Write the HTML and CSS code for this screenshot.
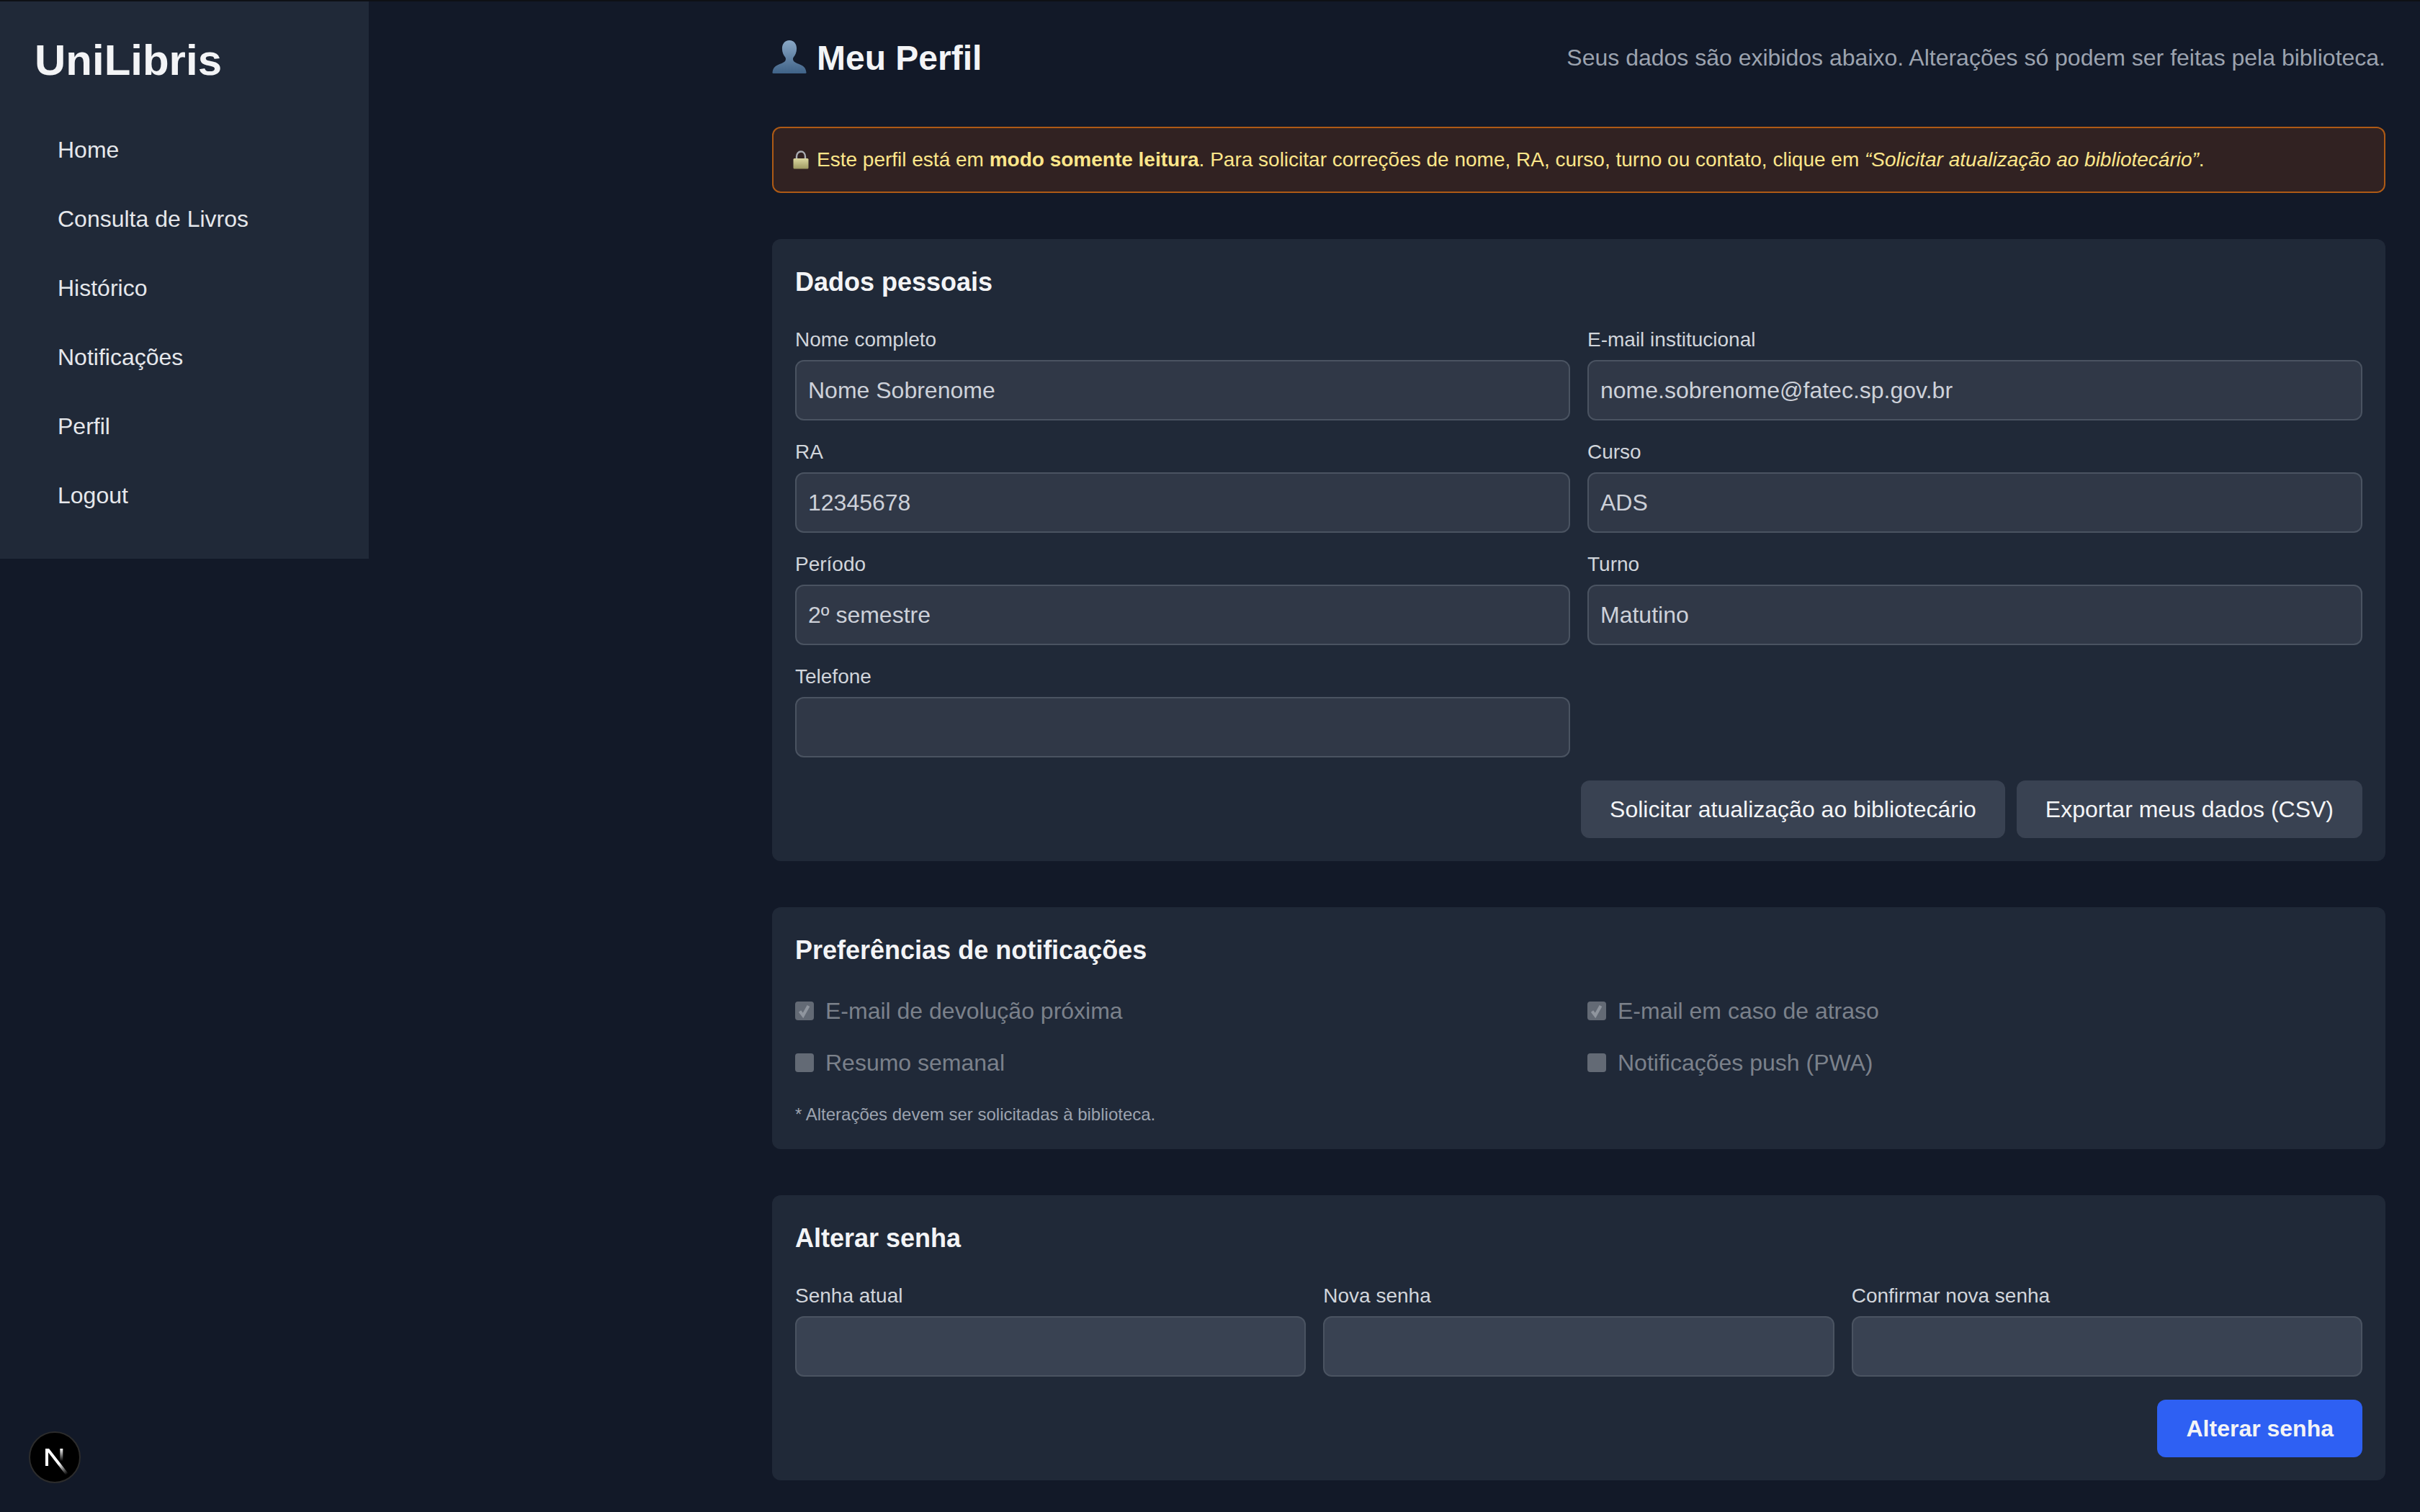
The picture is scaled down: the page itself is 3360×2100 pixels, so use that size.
FILE: index.html
```html
<!DOCTYPE html>
<html lang="pt-BR">
<head>
<meta charset="utf-8">
<title>UniLibris - Meu Perfil</title>
<link rel="stylesheet" href="styles.css">
</head>
<body>
<div class="app">
  <aside class="sidebar">
    <div class="logo">UniLibris</div>
    <nav class="nav">
      <a class="nav-item">Home</a>
      <a class="nav-item">Consulta de Livros</a>
      <a class="nav-item">Histórico</a>
      <a class="nav-item">Notificações</a>
      <a class="nav-item">Perfil</a>
      <a class="nav-item">Logout</a>
    </nav>
  </aside>
  <main class="main">
    <div class="content">
      <header class="page-head">
        <h1 class="page-title">
          <svg class="bust" viewBox="0 0 50 50" aria-hidden="true">
            <defs><linearGradient id="bustg" x1="0" y1="0" x2="0" y2="1"><stop offset="0" stop-color="#8aa8c6"/><stop offset="1" stop-color="#3f6287"/></linearGradient></defs>
            <path fill="url(#bustg)" d="M25 1c-7 0-10.500 5.500-10.500 12 0 5 1.800 9.500 4.500 12.500 1 1.300 1 3.500.2 5-1.500 2.800-6.500 4.200-11 6.200C4 38.500 1.500 41 .5 47.500c-.1 1 .3 1.500 1.200 1.500h46.600c.9 0 1.300-.5 1.200-1.500C48.500 41 46 38.500 41.800 36.700c-4.500-2-9.500-3.400-11-6.200-.8-1.500-.8-3.700.2-5 2.700-3 4.500-7.500 4.500-12.500C35.500 6.500 32 1 25 1z"/>
          </svg>
          <span>Meu Perfil</span>
        </h1>
        <p class="page-sub">Seus dados são exibidos abaixo. Alterações só podem ser feitas pela biblioteca.</p>
      </header>

      <div class="alert">
        <svg class="lock" viewBox="0 0 22 26" aria-hidden="true">
          <defs><linearGradient id="lockg" x1="0" y1="0" x2="0" y2="1"><stop offset="0" stop-color="#dcd8a0"/><stop offset="1" stop-color="#9f9a62"/></linearGradient></defs>
          <path fill="none" stroke="#a9adb3" stroke-width="2.400" d="M5 12V8.500C5 4.500 7.500 1.500 11 1.500s6 3 6 7V12"/>
          <rect x="0.500" y="11" width="21" height="14.500" rx="1.500" fill="url(#lockg)"/>
        </svg>
        <span>Este perfil está em <strong>modo somente leitura</strong>. Para solicitar correções de nome, RA, curso, turno ou contato, clique em <em>“Solicitar atualização ao bibliotecário”</em>.</span>
      </div>

      <section class="card">
        <h2 class="card-title">Dados pessoais</h2>
        <div class="grid-2">
          <label class="field"><span class="field-label">Nome completo</span><input class="input" readonly value="Nome Sobrenome"></label>
          <label class="field"><span class="field-label">E-mail institucional</span><input class="input" readonly value="nome.sobrenome@fatec.sp.gov.br"></label>
          <label class="field"><span class="field-label">RA</span><input class="input" readonly value="12345678"></label>
          <label class="field"><span class="field-label">Curso</span><input class="input" readonly value="ADS"></label>
          <label class="field"><span class="field-label">Período</span><input class="input" readonly value="2º semestre"></label>
          <label class="field"><span class="field-label">Turno</span><input class="input" readonly value="Matutino"></label>
          <label class="field"><span class="field-label">Telefone</span><input class="input" readonly></label>
        </div>
        <div class="actions">
          <button class="btn">Solicitar atualização ao bibliotecário</button>
          <button class="btn">Exportar meus dados (CSV)</button>
        </div>
      </section>

      <section class="card">
        <h2 class="card-title">Preferências de notificações</h2>
        <div class="checks">
          <div class="check"><span class="box"><svg viewBox="0 0 26 26" class="tick" aria-hidden="true"><path d="M6.500 13.500l4.500 6L18.500 6" fill="none" stroke="#8f959e" stroke-width="4.200"/></svg></span>E-mail de devolução próxima</div>
          <div class="check"><span class="box"><svg viewBox="0 0 26 26" class="tick" aria-hidden="true"><path d="M6.500 13.500l4.500 6L18.500 6" fill="none" stroke="#8f959e" stroke-width="4.200"/></svg></span>E-mail em caso de atraso</div>
          <div class="check"><span class="box"></span>Resumo semanal</div>
          <div class="check"><span class="box"></span>Notificações push (PWA)</div>
        </div>
        <p class="note">* Alterações devem ser solicitadas à biblioteca.</p>
      </section>

      <section class="card">
        <h2 class="card-title">Alterar senha</h2>
        <div class="grid-3">
          <label class="field"><span class="field-label">Senha atual</span><input class="input input-live" type="password"></label>
          <label class="field"><span class="field-label">Nova senha</span><input class="input input-live" type="password"></label>
          <label class="field"><span class="field-label">Confirmar nova senha</span><input class="input input-live" type="password"></label>
        </div>
        <div class="actions">
          <button class="btn btn-primary">Alterar senha</button>
        </div>
      </section>
    </div>
  </main>
  <div class="next-badge">
    <svg viewBox="0 0 180 180" class="next-mark" aria-hidden="true">
      <defs>
        <linearGradient id="ng1" gradientUnits="userSpaceOnUse" x1="109" y1="116.500" x2="144.500" y2="160.500"><stop stop-color="#fff"/><stop offset="1" stop-color="#fff" stop-opacity="0"/></linearGradient>
        <linearGradient id="ng2" gradientUnits="userSpaceOnUse" x1="121" y1="54" x2="120.800" y2="106"><stop stop-color="#fff"/><stop offset="1" stop-color="#fff" stop-opacity="0"/></linearGradient>
      </defs>
      <path fill="url(#ng1)" d="M149.500 157.500L69.100 54H54v72h12.100V69.400l73.900 95.500c3.300-2.200 6.500-4.700 9.500-7.400z"/>
      <rect fill="url(#ng2)" x="115" y="54" width="12" height="72"/>
    </svg>
  </div>
</div>
</body>
</html>
```
FILE: styles.css
```css
* { box-sizing: border-box; }
html, body { margin: 0; height: 100%; }
body {
  background: #121928;
  color: #f3f4f6;
  font-family: "Liberation Sans", Arial, sans-serif;
  overflow: hidden;
}
.app { display: flex; align-items: flex-start; min-height: 2100px; border-top: 2px solid #0e1015; }
.sidebar {
  flex: 0 0 512px;
  height: 774px;
  background: #202938;
  padding: 50px 0 0 48px;
}
.logo { font-size: 60px; font-weight: 700; line-height: 64px; color: #f3f4f6; margin-bottom: 44px; }
.nav { display: flex; flex-direction: column; margin-left: 32px; }
.nav-item { display: block; font-size: 32px; line-height: 48px; padding: 24px 0; color: #e5e7eb; }
.main { flex: 1; display: flex; justify-content: flex-end; padding: 0 48px 40px 0; }
.content { width: 2240px; }
.page-head { display: flex; justify-content: space-between; align-items: center; height: 174px; padding-bottom: 16px; }
.page-title { display: flex; align-items: center; gap: 14px; margin: 0; font-size: 48px; font-weight: 700; line-height: 64px; color: #f3f4f6; }
.bust { width: 48px; height: 48px; margin-bottom: 4px; }
.page-sub { margin: 0 0 2px; font-size: 32px; color: #9ca3af; }
.alert {
  display: flex; align-items: center; gap: 11px;
  height: 92px; padding: 0 27px;
  background: #312222;
  border: 2px solid #ae5a15;
  border-radius: 12px;
  font-size: 28px;
  color: #fde68a;
  margin-bottom: 64px;
}
.alert strong { font-weight: 700; }
.lock { width: 22px; height: 26px; }
.card { background: #202938; border-radius: 12px; padding: 32px; margin-bottom: 64px; }
.card:last-child { margin-bottom: 0; }
.card-title { margin: 0 0 32px; font-size: 36px; line-height: 56px; font-weight: 700; color: #f3f4f6; }
.grid-2 { display: grid; grid-template-columns: 1fr 1fr; column-gap: 24px; row-gap: 24px; }
.grid-3 { display: grid; grid-template-columns: 1fr 1fr 1fr; column-gap: 24px; }
.field { display: flex; flex-direction: column; gap: 8px; }
.field-label { font-size: 28px; line-height: 40px; color: #d1d5db; }
.input {
  display: block; width: 100%; height: 84px;
  padding: 0 16px;
  font: 32px "Liberation Sans", Arial, sans-serif;
  color: #cdd1d9;
  background: #303847;
  border: 2px solid #4a5361;
  border-radius: 12px;
  outline: none;
}
.input-live { background: #394252; }
.actions { display: flex; justify-content: flex-end; gap: 16px; margin-top: 32px; }
.btn {
  height: 80px; padding: 0 40px;
  font: 32px "Liberation Sans", Arial, sans-serif;
  color: #f3f4f6;
  background: #394252;
  border: 0;
  border-radius: 12px;
}
.btn-primary { background: #2e60f3; font-weight: 700; }
.checks { display: grid; grid-template-columns: 1fr 1fr; column-gap: 24px; row-gap: 24px; }
.check { display: flex; align-items: center; gap: 16px; font-size: 32px; line-height: 48px; color: #7b818b; }
.box { display: block; width: 26px; height: 26px; border-radius: 4px; background: #636a75; flex: none; }
.tick { display: block; width: 26px; height: 26px; }
.note { margin: 32px 0 0; font-size: 24px; line-height: 32px; color: #9ca3af; }
.next-badge {
  position: fixed; left: 40px; bottom: 40px;
  width: 72px; height: 72px; border-radius: 50%;
  background: #000; border: 2px solid #2c2c2c;
  display: flex; align-items: center; justify-content: center;
}
.next-mark { width: 60px; height: 60px; margin-right: 2px; }
```
